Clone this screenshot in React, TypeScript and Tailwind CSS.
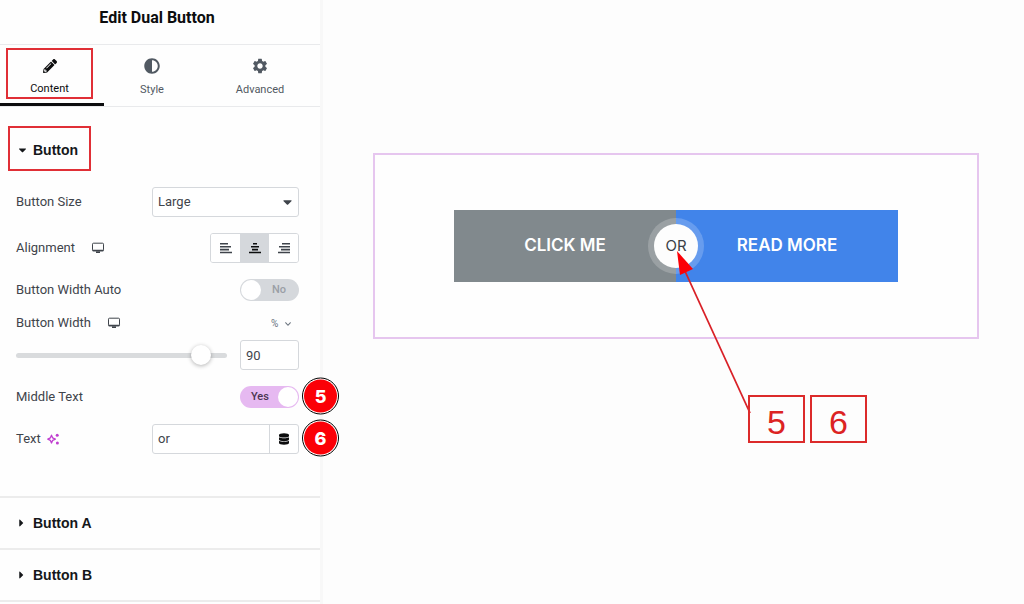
import React, { useState } from "react";
import {
  FaAdjust,
  FaCaretDown,
  FaCaretRight,
  FaChevronDown,
  FaDatabase,
  FaPencilAlt,
} from "react-icons/fa";
import { MdSettings } from "react-icons/md";

type Align = "left" | "center" | "right";

const alignLines: Record<Align, number[][]> = {
  left: [[0, 8], [0, 11], [0, 9], [0, 12]],
  center: [[4, 8], [2, 10], [3, 9], [0, 12]],
  right: [[4, 12], [1, 12], [3, 12], [0, 12]],
};

const AlignIcon = ({ type }: { type: Align }) => (
  <svg width="12" height="12" viewBox="0 0 12 12" stroke="currentColor" strokeWidth="1.6">
    {alignLines[type].map(([from, to], i) => (
      <path key={i} d={`M${from} ${1.8 + i * 2.9}H${to}`} />
    ))}
  </svg>
);

const MonitorIcon = () => (
  <svg width="14" height="12" viewBox="0 0 14 12" fill="none" stroke="#3f444b">
    <rect x="1.5" y="1.2" width="11" height="7.6" rx="1" strokeWidth="1" />
    <path d="M1.5 8.6H12.5M5 10.3H9" strokeWidth="1.5" />
  </svg>
);

const SparkleIcon = () => (
  <svg width="13" height="12" viewBox="0 0 13 12" fill="none" stroke="#c03fd0" strokeWidth="1.3">
    <path d="M4.5 2.2L5.7 4.9L8.4 6.1L5.7 7.3L4.5 10L3.3 7.3L.8 6.1L3.3 4.9Z" strokeLinejoin="round" />
    <circle cx="10.2" cy="2.2" r="1.5" fill="#c03fd0" stroke="none" />
    <circle cx="10.4" cy="10" r="1.5" fill="#c03fd0" stroke="none" />
  </svg>
);

interface SwitchProps {
  id: string;
  checked: boolean;
  onChange: (checked: boolean) => void;
}

const Switch = ({ id, checked, onChange }: SwitchProps) => (
  <span
    className={`relative flex items-center w-[59px] h-[22px] rounded-full text-[11px] font-medium ${
      checked ? "bg-[#e6b9f1] text-[#4a3550]" : "bg-[#d5d8dc] text-[#9a9fa6]"
    }`}
  >
    <input
      id={id}
      type="checkbox"
      checked={checked}
      onChange={(e) => onChange(e.target.checked)}
      className="absolute inset-0 w-full h-full opacity-0 cursor-pointer"
    />
    <span className={checked ? "pl-[11px]" : "pl-8"}>{checked ? "Yes" : "No"}</span>
    <span
      className={`absolute top-px w-5 h-5 rounded-full bg-white pointer-events-none ${
        checked ? "right-px" : "left-px"
      }`}
    />
  </span>
);

const StepBadge = ({ value }: { value: number }) => (
  <span className="absolute left-full bottom-1/2 translate-y-1/2 ml-[3px] mb-px z-10 flex items-center justify-center w-[37px] h-[37px] rounded-full border border-black bg-white">
    <span className="flex items-center justify-center w-[33px] h-[33px] rounded-full bg-[#fb0007] text-white text-lg font-extrabold font-[Inter,sans-serif]">
      {value}
    </span>
  </span>
);

const CollapsedSection = ({ title }: { title: string }) => (
  <button
    type="button"
    className="flex items-center w-full h-[52px] pl-[18px] gap-2 border-t-2 border-[#ececec] text-sm font-bold text-[#15171a] font-[Liberation_Sans,sans-serif]"
  >
    <FaCaretRight className="w-[7px] h-3" />
    {title}
  </button>
);

const StepBox = ({ value }: { value: number }) => (
  <span className="flex items-center justify-center w-[57px] h-12 pt-1.5 border-2 border-[#dc2b2b] text-[34px] text-[#dc2323] font-[Liberation_Sans,sans-serif]">
    {value}
  </span>
);

const Panel = () => {
  const [align, setAlign] = useState<Align>("center");
  const [autoWidth, setAutoWidth] = useState(false);
  const [middleText, setMiddleText] = useState(true);
  const [width, setWidth] = useState("90");

  return (
    <aside className="w-[323px] shrink-0 bg-[#fefefe] border-r-[3px] border-[#f8f8f8]">
      <h1 className="h-11 pr-1.5 pt-1.5 text-center text-base leading-6 font-bold text-[#0c0d0e]">
        Edit Dual Button
      </h1>

      <nav className="grid grid-cols-[104px_96px_120px] h-[63px] border-y border-[#e9eaec] text-[11px] leading-4 text-[#515962]">
        <button type="button" className="flex pl-1.5 pt-[3px] border-b-[3px] border-[#0c0d0e] text-[#0c0d0e]">
          <span className="flex flex-col items-center gap-2 w-[87px] h-[51px] pt-[9px] border-2 border-[#e02f36]">
            <FaPencilAlt className="w-[14px] h-4" />
            Content
          </span>
        </button>
        <button type="button" className="flex flex-col items-center gap-2 pt-[13px]">
          <FaAdjust className="w-4 h-4" />
          Style
        </button>
        <button type="button" className="flex flex-col items-center gap-[7px] pt-3">
          <MdSettings className="w-[18px] h-[18px]" />
          Advanced
        </button>
      </nav>

      <section className="pt-[19px] pb-[42px]">
        <button
          type="button"
          className="flex items-center gap-1.5 w-[83px] h-[45px] ml-2 pl-2 pt-0.5 border-2 border-[#e02f36] text-sm font-bold text-[#15171a] font-[Liberation_Sans,sans-serif]"
        >
          <FaCaretDown className="w-[9px] h-3" />
          Button
        </button>

        <div className="flex flex-col gap-4 mt-4 pl-4 pr-[21px] text-[13px] text-[#3f444b]">
          <div className="flex items-center justify-between h-[30px]">
            <label htmlFor="size">Button Size</label>
            <div className="relative w-[147px]">
              <select
                id="size"
                className="appearance-none w-full h-[30px] px-[5px] rounded-[3px] border border-[#d5d8dc] bg-white"
              >
                <option>Large</option>
                <option>Medium</option>
                <option>Small</option>
              </select>
              <FaCaretDown className="absolute right-1.5 top-2 w-[11px] h-[14px] pointer-events-none" />
            </div>
          </div>

          <div className="flex items-center justify-between h-[30px]">
            <span className="flex items-center gap-4">
              Alignment
              <MonitorIcon />
            </span>
            <div className="flex h-[30px] rounded-[3px] border border-[#d5d8dc] overflow-hidden">
              {(["left", "center", "right"] as Align[]).map((type) => (
                <button
                  key={type}
                  type="button"
                  aria-label={type}
                  onClick={() => setAlign(type)}
                  className={`flex items-center justify-center w-[29px] ${
                    align === type ? "bg-[#d5d8dc] text-[#0c0d0e]" : "bg-white"
                  }`}
                >
                  <AlignIcon type={type} />
                </button>
              ))}
            </div>
          </div>

          <div className="flex items-center justify-between">
            <label htmlFor="auto-width">Button Width Auto</label>
            <Switch id="auto-width" checked={autoWidth} onChange={setAutoWidth} />
          </div>

          <div className="flex flex-col gap-[11px]">
            <div className="flex items-center justify-between h-3">
              <label htmlFor="width" className="flex items-center gap-4">
                Button Width
                <MonitorIcon />
              </label>
              <div className="relative w-7 text-[10px] text-[#69727d]">
                <select aria-label="Unit" className="appearance-none block w-full">
                  <option>%</option>
                  <option>px</option>
                </select>
                <FaChevronDown className="absolute right-2 top-1 w-[6px] h-2 pointer-events-none" />
              </div>
            </div>
            <div className="flex items-center gap-[13px] h-[30px]">
              <input
                type="range"
                aria-label="Button Width"
                min="0"
                max="98"
                value={width}
                onChange={(e) => setWidth(e.target.value)}
                className="appearance-none flex-1 min-w-0 h-[5px] rounded-full bg-[#d9dbdd] [&::-webkit-slider-thumb]:appearance-none [&::-webkit-slider-thumb]:w-5 [&::-webkit-slider-thumb]:h-5 [&::-webkit-slider-thumb]:rounded-full [&::-webkit-slider-thumb]:bg-white [&::-webkit-slider-thumb]:shadow-[0_1px_4px_rgba(0,0,0,0.3)]"
              />
              <input
                id="width"
                value={width}
                onChange={(e) => setWidth(e.target.value)}
                className="w-[59px] h-[30px] px-[5px] rounded-[3px] border border-[#d5d8dc] bg-white"
              />
            </div>
          </div>

          <div className="relative flex items-center justify-between">
            <label htmlFor="middle-text">Middle Text</label>
            <Switch id="middle-text" checked={middleText} onChange={setMiddleText} />
            <StepBadge value={5} />
          </div>

          <div className="relative flex items-center justify-between">
            <label htmlFor="text" className="flex items-center gap-1.5">
              Text
              <SparkleIcon />
            </label>
            <div className="flex w-[147px] h-[30px] rounded-[3px] border border-[#d5d8dc] bg-white">
              <input id="text" defaultValue="or" className="flex-1 min-w-0 px-[5px]" />
              <button
                type="button"
                aria-label="Dynamic tags"
                className="flex items-center justify-center w-[29px] border-l border-[#d5d8dc] text-[#0c0d0e]"
              >
                <FaDatabase className="w-[10px] h-3" />
              </button>
            </div>
            <StepBadge value={6} />
          </div>
        </div>
      </section>

      <CollapsedSection title="Button A" />
      <CollapsedSection title="Button B" />
      <div className="border-t-2 border-[#ececec]" />
    </aside>
  );
};

const Preview = () => (
  <main className="flex-1 min-w-0 pl-[50px] pr-[45px] pt-[153px]">
    <div className="relative px-[79px] py-[55px] border-2 border-[#e6c6ef] bg-[#fefefe]">
      <div className="relative flex h-[72px] text-[17px] font-semibold text-white font-[Inter,sans-serif]">
        <a href="#" className="flex flex-1 items-center justify-center bg-[#81898d]">
          CLICK ME
        </a>
        <a href="#" className="flex flex-1 items-center justify-center bg-[#4184ea]">
          READ MORE
        </a>
        <span className="absolute left-1/2 top-1/2 -translate-x-1/2 -translate-y-1/2 flex items-center justify-center w-14 h-14 rounded-full bg-white/20">
          <span className="flex items-center justify-center w-11 h-11 rounded-full bg-[#fdfdfd] text-[15px] font-normal text-[#3b3f45]">
            OR
          </span>
        </span>
      </div>

      <svg
        className="absolute left-1/2 top-24 pointer-events-none"
        width="76"
        height="166"
        viewBox="0 0 76 166"
      >
        <path d="M8 18L74 162" stroke="#d92027" strokeWidth="1.8" />
        <path d="M1 0L17 18L4 24Z" fill="#fb0007" />
      </svg>
      <div className="absolute left-1/2 top-60 flex gap-[5px] ml-[72px]">
        <StepBox value={5} />
        <StepBox value={6} />
      </div>
    </div>
  </main>
);

const App = () => {
  return (
    <div className="flex min-h-screen bg-[#fdfdfd] font-[Roboto,sans-serif]">
      <Panel />
      <Preview />
    </div>
  );
};

export default App;
